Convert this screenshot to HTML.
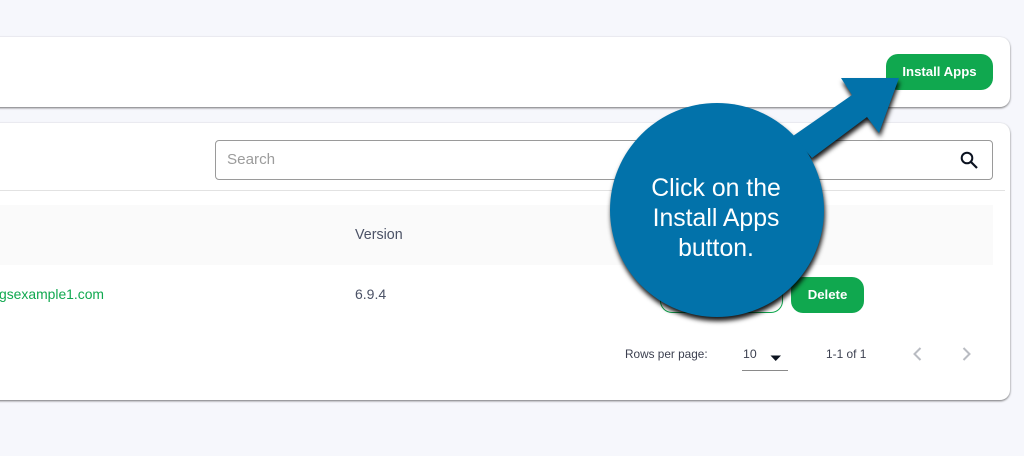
<!DOCTYPE html>
<html lang="en">
<head>
<meta charset="utf-8">
<style>
html,body{margin:0;padding:0;width:1024px;height:456px;overflow:hidden;background:#f6f7fc;font-family:"Liberation Sans",sans-serif}
.a{position:absolute}
.card{background:#fff;border-radius:10px;box-shadow:0 1px 2px rgba(0,0,0,.55)}
.btn{background:#10a84f;color:#fff;border-radius:12px;font-size:13.2px;font-weight:bold;text-align:center;line-height:36px;height:36px}
.t{white-space:nowrap;line-height:16px}
</style>
</head>
<body>
<div class="a card" style="left:-20px;top:37px;width:1030px;height:70px"></div>
<div class="a card" style="left:-20px;top:123px;width:1030px;height:277px"></div>

<div class="a" style="left:215px;top:140px;width:776px;height:38px;border:1px solid #9a9a9a;border-radius:4px"></div>
<div class="a t" style="left:227px;top:152px;font-size:15.2px;color:#9c9c9c">Search</div>
<svg class="a" style="left:958px;top:149px" width="22" height="22" viewBox="0 0 22 22"><circle cx="9" cy="9" r="5.3" fill="none" stroke="#0b1220" stroke-width="2"/><path d="M13 13l6 6" stroke="#0b1220" stroke-width="2.2" fill="none"/></svg>

<div class="a" style="left:0;top:190px;width:1005px;height:1px;background:#e2e2e2"></div>
<div class="a" style="left:0;top:205px;width:993px;height:60px;background:#fafafa"></div>
<div class="a t" style="left:355px;top:227px;font-size:14.3px;color:#4b5266">Version</div>
<div class="a t" style="left:-1px;top:286px;font-size:13.9px;color:#10a84f">gsexample1.com</div>
<div class="a t" style="left:355px;top:286px;font-size:14px;color:#4b5266">6.9.4</div>

<div class="a" style="left:660px;top:277px;width:121px;height:34px;border:1px solid #10a84f;border-radius:12px"></div>
<div class="a btn" style="left:791px;top:277px;width:73px">Delete</div>
<div class="a btn" style="left:886px;top:54px;width:107px">Install Apps</div>

<div class="a t" style="left:625px;top:346px;font-size:11.8px;color:#3c4050">Rows per page:</div>
<div class="a t" style="left:743px;top:346px;font-size:12.3px;color:#3c4050">10</div>
<svg class="a" style="left:770px;top:355px" width="12" height="7" viewBox="0 0 12 7"><path d="M0.5 0.5h10.5L5.7 6z" fill="#0d1420"/></svg>
<div class="a" style="left:742px;top:370px;width:46px;height:1px;background:#8a8a8a"></div>
<div class="a t" style="left:826px;top:346px;font-size:11.9px;color:#3c4050">1-1 of 1</div>
<svg class="a" style="left:910px;top:346px" width="14" height="16" viewBox="0 0 14 16"><path d="M10.5 2L4.5 8l6 6" fill="none" stroke="#b9bcc2" stroke-width="2"/></svg>
<svg class="a" style="left:960px;top:346px" width="14" height="16" viewBox="0 0 14 16"><path d="M3.5 2l6 6-6 6" fill="none" stroke="#b9bcc2" stroke-width="2"/></svg>

<svg class="a" style="left:0;top:0;filter:drop-shadow(1px 4px 2.5px rgba(0,0,0,.9))" width="1024" height="456" viewBox="0 0 1024 456">
<path d="M899 78L841 78L852 95L793 136L812 158L867 117L879 133Z" fill="#0272aa"/>
<circle cx="717" cy="210" r="107" fill="#0272aa"/>
</svg>
<div class="a" style="left:610px;top:174px;width:212px;text-align:center;color:#fff;font-size:24.8px;line-height:30px">Click on the<br>Install Apps<br>button.</div>
</body>
</html>
